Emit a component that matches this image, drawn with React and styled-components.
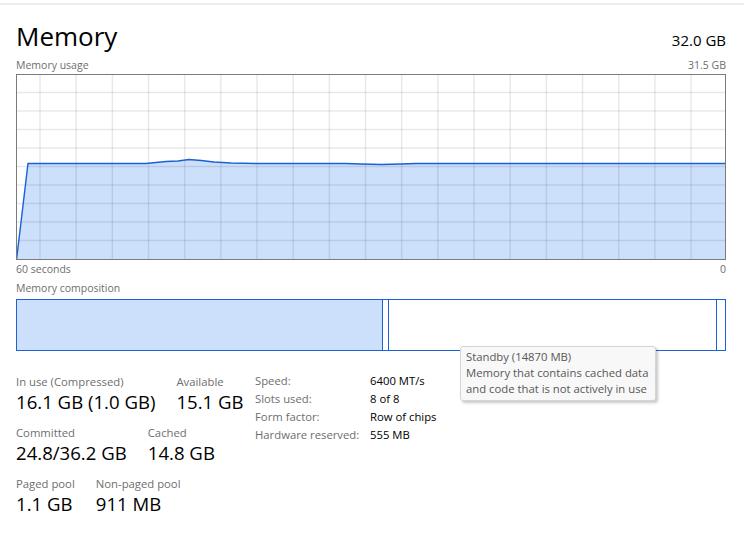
import React from 'react';
import styled, { createGlobalStyle } from 'styled-components';

const GlobalStyle = createGlobalStyle`
  body {
    margin: 0;
    background: #fff;
    font-family: "Segoe UI", "Open Sans", "Noto Sans", sans-serif;
  }
`;

const Page = styled.div`
  position: relative;
  width: 748px;
  height: 539px;
  overflow: hidden;
  background: #fff;
`;

const TopStrip = styled.div`
  margin-top: 3px;
  width: 744px;
  height: 2px;
  background: #ededed;
`;

const Content = styled.div`
  width: 710px;
  padding: 0 0 0 16px;
`;

const Header = styled.div`
  display: flex;
  justify-content: space-between;
  align-items: baseline;
  height: 52px;
  padding-top: 11px;
  box-sizing: border-box;
`;

const Title = styled.h1`
  margin: 0;
  font-weight: 400;
  font-size: 26px;
  line-height: 40px;
  color: #000;
`;

const Total = styled.div`
  font-size: 15px;
  color: #000;
`;

const CaptionRow = styled.div`
  display: flex;
  justify-content: space-between;
  box-sizing: border-box;
  font-size: 10.5px;
  line-height: 15px;
  height: ${p => p.$h || 17}px;
  padding-top: ${p => p.$top || 0}px;
  color: #6e6e6e;
`;

const Chart = styled.svg`
  display: block;
  width: 710px;
  height: 186px;
`;

const Composition = styled.div`
  position: relative;
  display: flex;
  width: 710px;
  height: 52px;
  box-sizing: border-box;
  border: 1px solid #1c62d6;
`;

const Segment = styled.div`
  height: 100%;
  box-sizing: border-box;
  background: ${p => (p.$filled ? '#cce0fb' : '#fff')};
  border-right: ${p => (p.$last ? 'none' : '1px solid #1c62d6')};
`;

const Tooltip = styled.div`
  position: absolute;
  left: 460px;
  top: 346px;
  width: 196px;
  box-sizing: border-box;
  padding: 2px 5px 3px 5px;
  background: #f8f8f8;
  border: 1px solid #d4d4d4;
  border-radius: 3px;
  box-shadow: 2px 2px 3px rgba(0, 0, 0, 0.22);
  font-size: 11.3px;
  line-height: 16px;
  color: #575757;
  white-space: nowrap;
`;

const Stats = styled.div`
  display: flex;
  margin-top: 23px;
`;

const LeftStats = styled.div`
  width: 239px;
  display: flex;
  flex-direction: column;
  gap: 10px;
`;

const StatRow = styled.div`
  display: flex;
  gap: 21px;
`;

const Stat = styled.div`
  display: flex;
  flex-direction: column;
`;

const Label = styled.div`
  font-size: 11.3px;
  line-height: 15px;
  color: #6e6e6e;
`;

const Value = styled.div`
  font-size: 18.6px;
  line-height: 26px;
  color: #000;
`;

const Specs = styled.div`
  display: grid;
  grid-template-columns: 115px auto;
  grid-auto-rows: 18px;
  font-size: 11.3px;
  line-height: 15px;
  margin-top: -1px;
`;

const SpecLabel = styled.div`
  color: #6e6e6e;
`;

const SpecValue = styled.div`
  color: #000;
`;

const W = 710;
const H = 186;

function UsageChart() {
  const vlines = [];
  for (let k = 0; k < 19; k++) vlines.push(24 + k * 36.17);
  const hlines = [];
  for (let k = 1; k < 10; k++) hlines.push(k * 18.5);
  const pts = [
    [12, 89.5], [130, 89.5], [140, 88.5], [150, 87.5], [162, 87], [173, 85.5],
    [185, 86.5], [198, 88], [215, 89], [240, 89.5], [330, 89.5], [345, 90],
    [365, 90.5], [385, 90], [400, 89.5], [W, 89.5],
  ];
  const line = pts.map(p => p.join(',')).join(' L');
  const area = `M0,${H} L${line} L${W},${H} Z`;
  return (
    <Chart viewBox={`0 0 ${W} ${H}`}>
      <path d={area} fill="#cce0fb" />
      {vlines.map(x => (
        <line key={'v' + x} x1={x} x2={x} y1={0} y2={H} stroke="rgba(0,0,0,0.09)" strokeWidth="1.5" />
      ))}
      {hlines.map(y => (
        <line key={'h' + y} x1={0} x2={W} y1={y} y2={y} stroke="rgba(0,0,0,0.09)" strokeWidth="1.5" />
      ))}
      <path d={`M0.5,${H} L${line}`} fill="none" stroke="#1a60d6" strokeWidth="1.4" />
      <rect x="0.5" y="0.5" width={W - 1} height={H - 1} fill="none" stroke="#7b7b7b" strokeWidth="1" />
    </Chart>
  );
}

const segments = [
  { w: 365.5, filled: true },
  { w: 6 },
  { w: 328 },
  { w: 8.5, last: true },
];

const leftStats = [
  [['In use (Compressed)', '16.1 GB (1.0 GB)'], ['Available', '15.1 GB']],
  [['Committed', '24.8/36.2 GB'], ['Cached', '14.8 GB']],
  [['Paged pool', '1.1 GB'], ['Non-paged pool', '911 MB']],
];

const specs = [
  ['Speed:', '6400 MT/s'],
  ['Slots used:', '8 of 8'],
  ['Form factor:', 'Row of chips'],
  ['Hardware reserved:', '555 MB'],
];

export default function App() {
  return (
    <Page>
      <GlobalStyle />
      <TopStrip />
      <Content>
        <Header>
          <Title>Memory</Title>
          <Total>32.0 GB</Total>
        </Header>
        <CaptionRow $h={17} $top={1}>
          <span>Memory usage</span>
          <span>31.5 GB</span>
        </CaptionRow>
        <UsageChart />
        <CaptionRow $h={20} $top={2}>
          <span>60 seconds</span>
          <span>0</span>
        </CaptionRow>
        <CaptionRow $h={19} $top={1}>
          <span>Memory composition</span>
        </CaptionRow>
        <Composition>
          {segments.map((s, i) => (
            <Segment key={i} $filled={s.filled} $last={s.last} style={{ width: s.w }} />
          ))}
        </Composition>
        <Stats>
          <LeftStats>
            {leftStats.map((row, i) => (
              <StatRow key={i}>
                {row.map(([label, value]) => (
                  <Stat key={label}>
                    <Label>{label}</Label>
                    <Value>{value}</Value>
                  </Stat>
                ))}
              </StatRow>
            ))}
          </LeftStats>
          <Specs>
            {specs.map(([l, v]) => (
              <React.Fragment key={l}>
                <SpecLabel>{l}</SpecLabel>
                <SpecValue>{v}</SpecValue>
              </React.Fragment>
            ))}
          </Specs>
        </Stats>
      </Content>
      <Tooltip>
        Standby (14870 MB)
        <br />
        Memory that contains cached data
        <br />
        and code that is not actively in use
      </Tooltip>
    </Page>
  );
}
